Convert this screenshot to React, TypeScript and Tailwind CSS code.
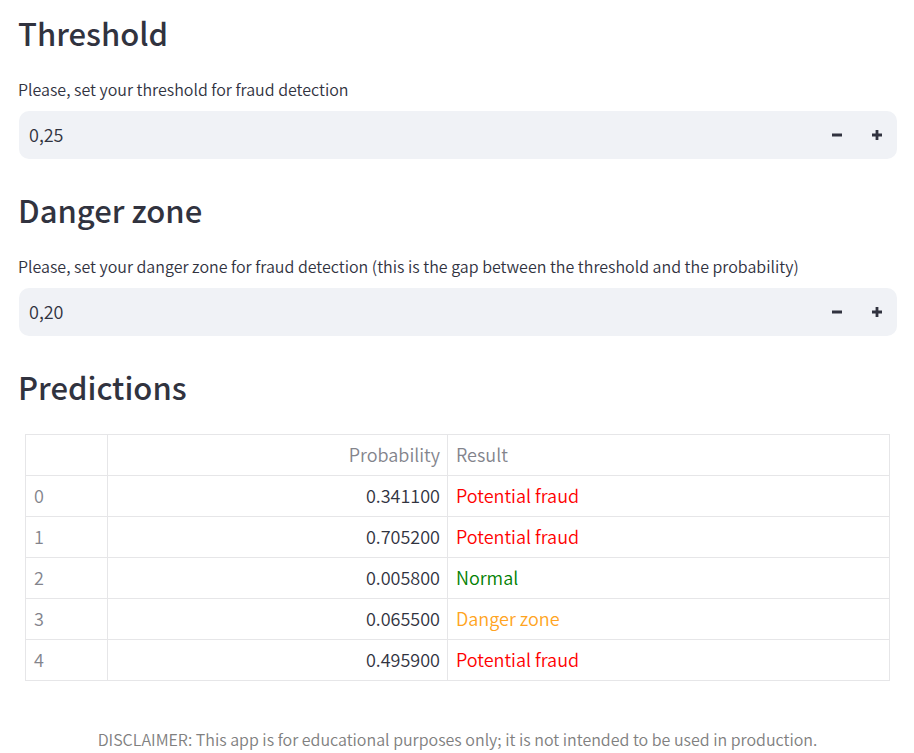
import { useState } from "react";

const STEP = 0.01;

function format(value: number) {
  return value.toFixed(2).replace(".", ",");
}

function NumberField({ id, label, initial }: { id: string; label: string; initial: number }) {
  const [text, setText] = useState(format(initial));

  const change = (delta: number) => {
    const current = Number(text.replace(",", ".")) || 0;
    setText(format(Math.min(1, Math.max(0, current + delta))));
  };

  return (
    <div>
      <label htmlFor={id} className="block pb-2.5 text-base leading-6 font-[350]">
        {label}
      </label>
      <div className="ml-px flex h-12 overflow-hidden rounded-[10px] bg-[#f0f2f6]">
        <input
          id={id}
          type="text"
          inputMode="decimal"
          value={text}
          onChange={(event) => setText(event.target.value)}
          className="min-w-0 flex-1 bg-transparent px-2.5 pb-0.5 text-lg font-[350] outline-none"
        />
        <button
          type="button"
          aria-label={`Decrease ${id}`}
          onClick={() => change(-STEP)}
          className="flex w-10 items-center justify-center"
        >
          <svg viewBox="0 0 10 10" className="size-2.5" aria-hidden="true">
            <path d="M0 3.6h10v2.8H0z" fill="currentColor" />
          </svg>
        </button>
        <button
          type="button"
          aria-label={`Increase ${id}`}
          onClick={() => change(STEP)}
          className="flex w-10 items-center justify-center"
        >
          <svg viewBox="0 0 10 10" className="size-2.5" aria-hidden="true">
            <path d="M3.6 0h2.8v3.6H10v2.8H6.4V10H3.6V6.4H0V3.6h3.6z" fill="currentColor" />
          </svg>
        </button>
      </div>
    </div>
  );
}

const rows = [
  { probability: "0.341100", result: "Potential fraud", color: "text-[#ff0000]" },
  { probability: "0.705200", result: "Potential fraud", color: "text-[#ff0000]" },
  { probability: "0.005800", result: "Normal", color: "text-[#008000]" },
  { probability: "0.065500", result: "Danger zone", color: "text-[#ffa421]" },
  { probability: "0.495900", result: "Potential fraud", color: "text-[#ff0000]" },
];

const heading = "text-[31px] leading-10 font-medium";
const cell = "h-[41px] border border-[#e6e6e8] pt-0 pr-[7px] pb-0.5 pl-2 font-[350]";

export default function App() {
  return (
    <main className="flex min-h-screen flex-col bg-white pt-[13px] pr-[17px] pl-[18px] font-['Noto_Sans_CJK_SC',sans-serif] text-[#31333f]">
      <section className="flex flex-col gap-6 pb-[31px]">
        <h2 className={heading}>Threshold</h2>
        <NumberField id="threshold" label="Please, set your threshold for fraud detection" initial={0.25} />
      </section>

      <section className="flex flex-col gap-6 pb-[31px]">
        <h2 className={heading}>Danger zone</h2>
        <NumberField
          id="danger-zone"
          label="Please, set your danger zone for fraud detection (this is the gap between the threshold and the probability)"
          initial={0.2}
        />
      </section>

      <section className="flex flex-col gap-[27px]">
        <h2 className={heading}>Predictions</h2>
        <div className="px-[7px]">
          <table className="w-full table-fixed border-collapse text-lg leading-6">
            <colgroup>
              <col className="w-[82px]" />
              <col className="w-[340px]" />
              <col />
            </colgroup>
            <thead>
              <tr className="text-[#83848c]">
                <td className={cell}></td>
                <th scope="col" className={`${cell} text-right`}>Probability</th>
                <th scope="col" className={`${cell} text-left`}>Result</th>
              </tr>
            </thead>
            <tbody>
              {rows.map((row, index) => (
                <tr key={index}>
                  <th scope="row" className={`${cell} text-left text-[#83848c]`}>{index}</th>
                  <td className={`${cell} text-right`}>{row.probability}</td>
                  <td className={`${cell} ${row.color}`}>{row.result}</td>
                </tr>
              ))}
            </tbody>
          </table>
        </div>
      </section>

      <footer className="pt-[46px] text-center text-base leading-6 font-[350] text-[#808080]">
        DISCLAIMER: This app is for educational purposes only; it is not intended to be used in production.
      </footer>
    </main>
  );
}
